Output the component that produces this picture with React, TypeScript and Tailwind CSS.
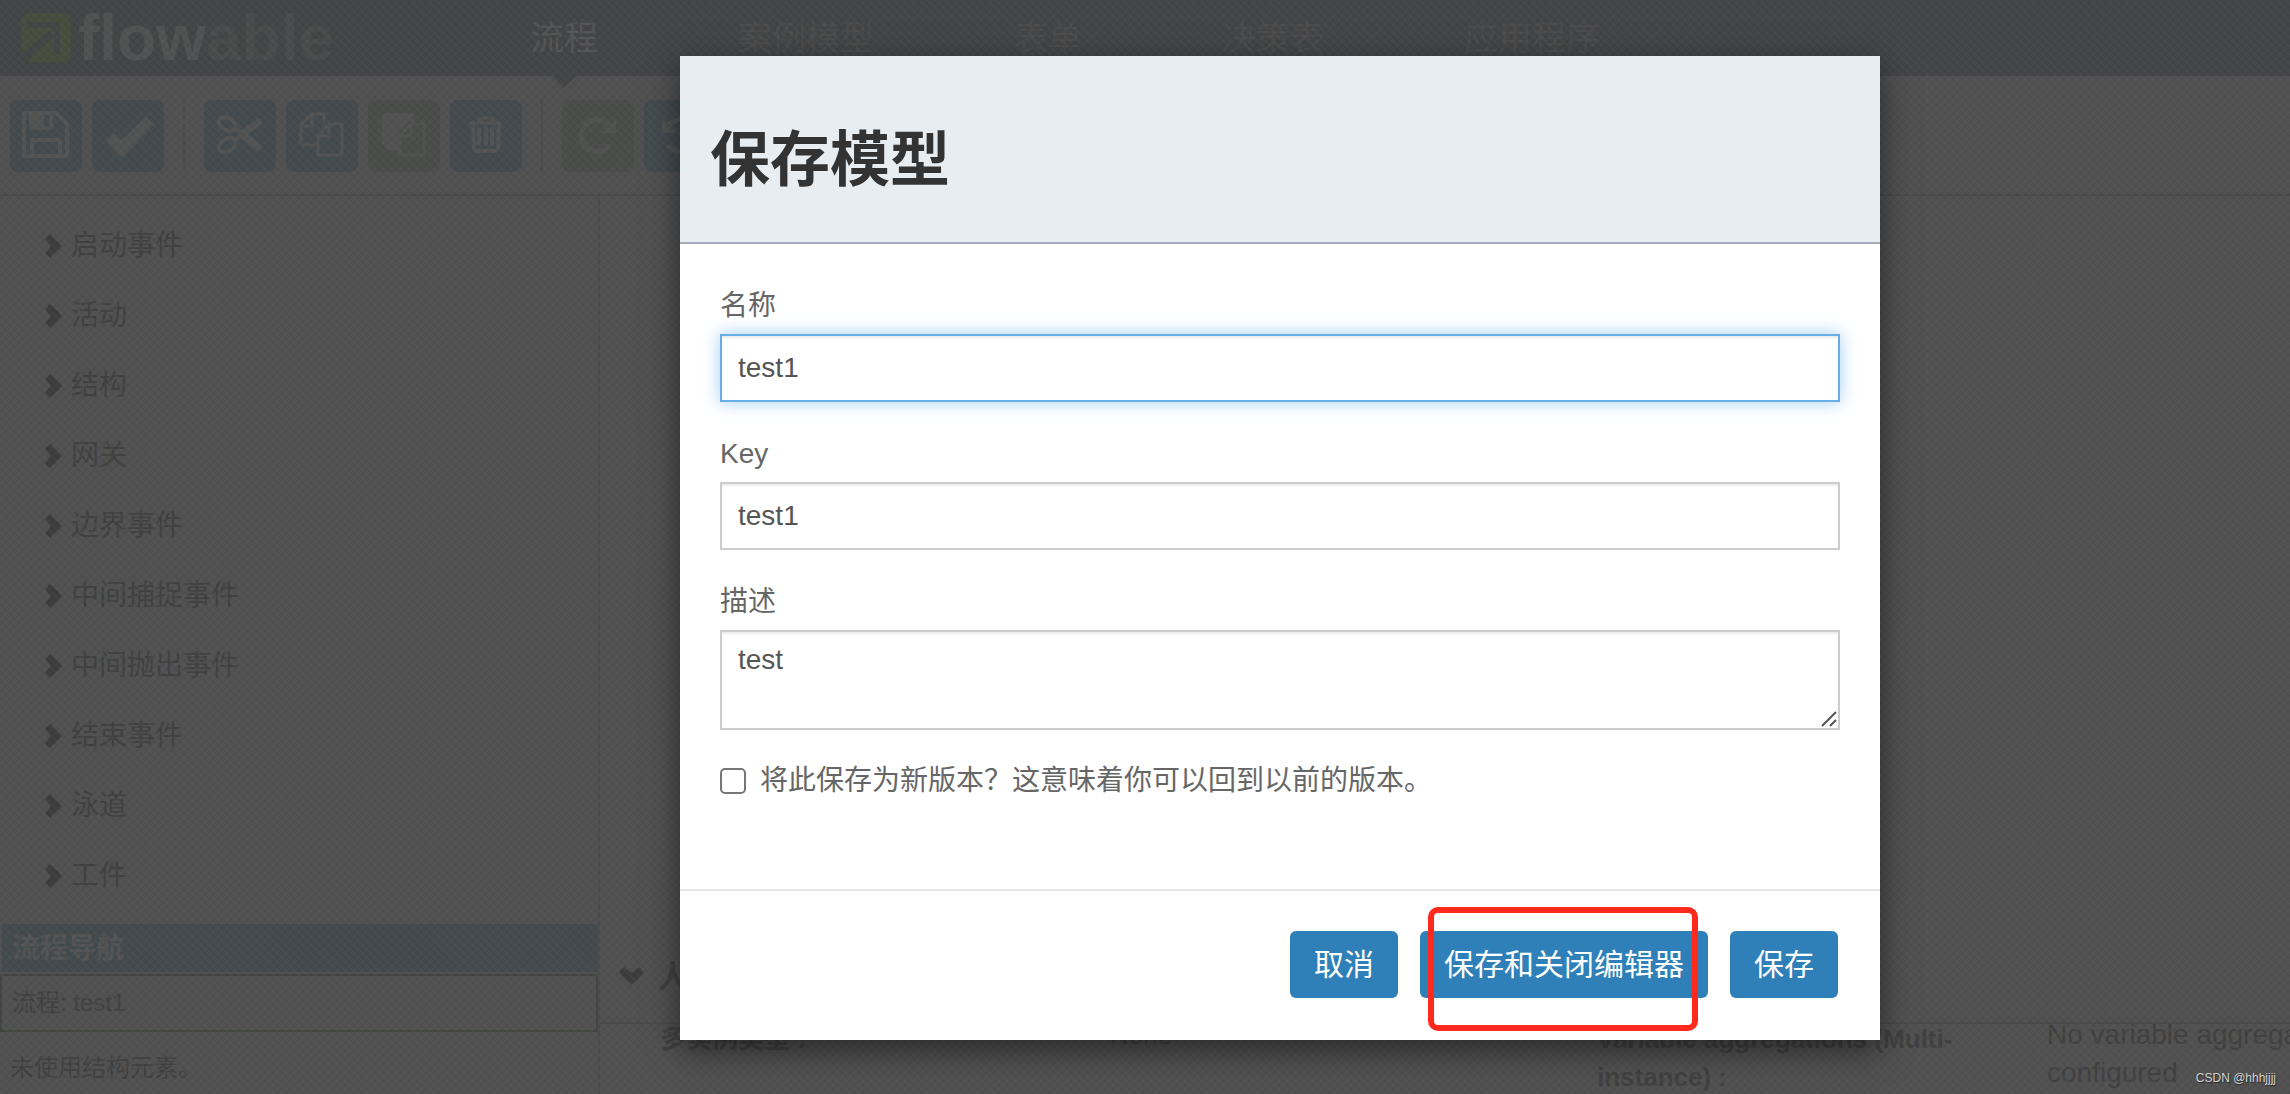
import { useState, type ReactNode } from "react";

const NAV = ["流程", "案例模型", "表单", "决策表", "应用程序"];

const PALETTE = [
  "启动事件",
  "活动",
  "结构",
  "网关",
  "边界事件",
  "中间捕捉事件",
  "中间抛出事件",
  "结束事件",
  "泳道",
  "工件",
];

function Icon({ children }: { children: ReactNode }) {
  return (
    <svg viewBox="0 0 72 72" className="size-full" fill="none" stroke="currentColor" aria-hidden="true">
      {children}
    </svg>
  );
}

function SaveIcon() {
  return (
    <Icon>
      <path d="M14 13H46L57 24V56H14Z" strokeWidth="4" strokeLinejoin="round" />
      <path d="M22 56V40H50V56" strokeWidth="4" strokeLinejoin="round" />
      <path
        d="M19 13H43V26Q43 30 39 30H24Q19 30 19 25ZM34 15V26H39V15Z"
        fill="currentColor"
        fillRule="evenodd"
        stroke="none"
      />
    </Icon>
  );
}

function CheckIcon() {
  return (
    <Icon>
      <path d="M14 41L22 33L30 40L54 17L62 24L30 58Z" fill="currentColor" stroke="none" />
    </Icon>
  );
}

function CutIcon() {
  return (
    <Icon>
      <ellipse cx="23" cy="24" rx="9" ry="6" strokeWidth="4" transform="rotate(28 23 24)" />
      <ellipse cx="23" cy="45" rx="9" ry="6" strokeWidth="4" transform="rotate(-32 23 45)" />
      <path d="M30 28L40 34L30 41" strokeWidth="4" />
      <path
        d="M36 32L53 19Q58 18 58 24L44 34L58 46Q57 52 52 50L36 38Z"
        fill="currentColor"
        stroke="none"
      />
    </Icon>
  );
}

function CopyIcon() {
  return (
    <Icon>
      <path d="M31 45H17L15 43V25L26 14H38V24M15 26H26V14" strokeWidth="3" strokeLinejoin="round" />
      <path d="M43 24H56V55H32V36L43 24V36H32" strokeWidth="3" strokeLinejoin="round" />
    </Icon>
  );
}

function PasteIcon() {
  return (
    <Icon>
      <path
        d="M16 13H44Q46 13 46 15V22H40L31 33V50H20L14 44V15Q14 13 16 13Z"
        fill="currentColor"
        stroke="none"
      />
      <path d="M43 24H56V55H32V36L43 24V36H32" strokeWidth="3" strokeLinejoin="round" />
    </Icon>
  );
}

function TrashIcon() {
  return (
    <Icon>
      <path d="M19 23H52M28 22L31 18H41L44 22" strokeWidth="3" />
      <path d="M23 24L24 48Q24 51 28 51H44Q48 51 48 48L49 24" strokeWidth="4" />
      <path d="M29 29V44M36 29V44M42 29V44" strokeWidth="4" strokeLinecap="round" />
    </Icon>
  );
}

function RedoIcon() {
  return (
    <Icon>
      <path d="M47 25A16 16 0 1 0 48 45" strokeWidth="5" />
      <path d="M54 19V33H39Z" fill="currentColor" stroke="none" />
    </Icon>
  );
}

function UndoIcon() {
  return (
    <Icon>
      <path d="M25 25A16 16 0 1 1 24 45" strokeWidth="5" />
      <path d="M18 19V33H33Z" fill="currentColor" stroke="none" />
    </Icon>
  );
}

function Chevron({ className }: { className: string }) {
  return (
    <svg viewBox="0 0 18 24" className={className} fill="currentColor" aria-hidden="true">
      <path d="M0 5L5 0L17 12L5 24L0 19L6 12Z" />
    </svg>
  );
}

function ToolButton({ label, disabled, children }: { label: string; disabled?: boolean; children: ReactNode }) {
  return (
    <button
      type="button"
      aria-label={label}
      disabled={disabled}
      className="size-[72px] shrink-0 rounded-lg bg-[#444b4e] text-[#525353] disabled:bg-[#4b4d4b] disabled:text-[#515251]"
    >
      {children}
    </button>
  );
}

function Divider() {
  return (
    <div className="flex w-5 shrink-0 justify-center">
      <div className="h-[72px] w-0.5 bg-[#4c4c4c]" />
    </div>
  );
}

function Header() {
  return (
    <header className="flex h-[76px] items-center bg-[#444547]">
      <a href="#home" className="ml-5 flex w-[320px] shrink-0 items-center gap-1.5">
        <svg viewBox="0 0 52 52" className="size-[52px] shrink-0" aria-hidden="true">
          <path d="M10 1H41Q51 1 51 11V40Q51 50 41 50H8L1 51V10Q1 1 10 1Z" fill="#494d3f" />
          <path d="M10 13H37V40" fill="none" stroke="#444547" strokeWidth="6" strokeLinecap="round" />
          <path d="M1 50V42L29 19L34 23L10 50Z" fill="#444547" />
          <path d="M9 47L29 28V49H9Z" fill="#494d3f" />
        </svg>
        <span className="text-[64px] leading-[68px] font-bold text-[#515252]">
          flow<span className="text-[#4a4c4b]">able</span>
        </span>
      </a>
      <nav className="ml-[190px] flex gap-[140px] text-[34px] leading-[44px] whitespace-nowrap">
        {NAV.map((item, i) => (
          <a
            key={item}
            href={`#nav-${i}`}
            className={i === 0 ? "relative text-[#555555]" : "text-[#4b4c4b]"}
          >
            {item}
            {i === 0 && (
              <svg
                viewBox="0 0 24 12"
                className="absolute top-[60px] left-1/2 h-3 w-6 -translate-x-1/2"
                fill="#444547"
                aria-hidden="true"
              >
                <path d="M0 0H24L12 12Z" />
              </svg>
            )}
          </a>
        ))}
      </nav>
    </header>
  );
}

function Toolbar() {
  return (
    <div className="flex h-[120px] items-start gap-2.5 overflow-hidden border-b-2 border-[#4a4a4a] pt-6 pl-2.5">
      <ToolButton label="保存模型"><SaveIcon /></ToolButton>
      <ToolButton label="验证模型"><CheckIcon /></ToolButton>
      <Divider />
      <ToolButton label="剪切"><CutIcon /></ToolButton>
      <ToolButton label="复制"><CopyIcon /></ToolButton>
      <ToolButton label="粘贴" disabled><PasteIcon /></ToolButton>
      <ToolButton label="删除"><TrashIcon /></ToolButton>
      <Divider />
      <ToolButton label="重做" disabled><RedoIcon /></ToolButton>
      <ToolButton label="撤销"><UndoIcon /></ToolButton>
    </div>
  );
}

function Sidebar() {
  return (
    <aside className="flex w-[600px] shrink-0 flex-col border-r-2 border-[#4c4c4c] text-[#414141]">
      <ul className="pt-[15px] pb-[13px]">
        {PALETTE.map((item) => (
          <li key={item}>
            <button type="button" className="flex h-[70px] items-center gap-2 pl-[45px] text-[28px]">
              <Chevron className="h-6 w-[18px] text-[#3d3d3d]" />
              {item}
            </button>
          </li>
        ))}
      </ul>
      <h2 className="ml-0.5 h-12 bg-[#444b4e] pl-[10px] text-[28px] leading-[50px] font-bold text-[#545454]">
        流程导航
      </h2>
      <div className="mt-0.5 h-[58px] border-2 border-[#424640] pl-[10px] text-2xl leading-[54px]">流程: test1</div>
      <p className="pt-4 pl-[10px] text-2xl leading-[40px]">未使用结构元素。</p>
    </aside>
  );
}

function Properties() {
  return (
    <section className="text-[#414141]">
      <div className="flex h-[93px] items-center gap-4 border-b-2 border-[#4a4a4a] pl-[22px] text-[32px] font-bold">
        <Chevron className="h-[27px] w-[19px] rotate-90 text-[#3d3d3d]" />
        <span>人</span>
      </div>
      <div className="flex h-[70px] pl-[60px] text-[26px] leading-[38px]">
        <div className="-mt-1 w-[450px] shrink-0 font-bold">多实例类型 :</div>
        <div className="-mt-2 w-[487px] shrink-0">None</div>
        <div className="-mt-1 w-[390px] shrink-0 font-bold">Variable aggregations (Multi-instance) :</div>
        <div className="-mt-2 ml-[60px] w-[380px] shrink-0 text-[28px]">No variable aggregations configured</div>
      </div>
    </section>
  );
}

const FIELD =
  "block w-full rounded-none border-2 border-[#cccccc] bg-white px-4 text-[28px] text-[#555555] shadow-[inset_0_2px_2px_rgba(0,0,0,0.075)] outline-none";
const ACTION = "h-[67px] rounded-md bg-[#2f80b9] px-6 text-[30px] text-white";

function SaveDialog() {
  const [name, setName] = useState("test1");
  const [key, setKey] = useState("test1");
  const [description, setDescription] = useState("test");
  const [newVersion, setNewVersion] = useState(false);

  return (
    <form
      role="dialog"
      aria-labelledby="dialog-title"
      onSubmit={(e) => e.preventDefault()}
      className="w-[1200px] bg-white shadow-[0_10px_30px_rgba(0,0,0,0.5)]"
    >
      <div className="border-b-2 border-[#a4adba] bg-[#e8edf1] px-[30px] pt-[69px] pb-[45px]">
        <h1 id="dialog-title" className="text-[60px] leading-[72px] font-bold text-[#333333]">
          保存模型
        </h1>
      </div>

      <div className="px-10 pt-[42px] pb-[89px] text-[28px] text-[#666666]">
        <label htmlFor="model-name" className="block leading-[40px]">名称</label>
        <input
          id="model-name"
          value={name}
          onChange={(e) => setName(e.target.value)}
          className="mt-2 mb-8 block h-[68px] w-full rounded-none border-2 border-[#66afe9] bg-white px-4 text-[28px] text-[#555555] shadow-[inset_0_2px_2px_rgba(0,0,0,0.075),0_0_16px_rgba(102,175,233,0.6)] outline-none"
        />
        <label htmlFor="model-key" className="block leading-[40px]">Key</label>
        <input
          id="model-key"
          value={key}
          onChange={(e) => setKey(e.target.value)}
          className={`${FIELD} mt-2 mb-8 h-[68px]`}
        />
        <label htmlFor="model-description" className="block leading-[40px]">描述</label>
        <div className="relative mt-2">
          <textarea
            id="model-description"
            value={description}
            onChange={(e) => setDescription(e.target.value)}
            className={`${FIELD} h-[100px] resize-none pt-2 leading-[40px]`}
          />
          <svg
            viewBox="0 0 16 16"
            className="pointer-events-none absolute right-[3px] bottom-[3px] size-4"
            stroke="#555555"
            strokeWidth="2"
            aria-hidden="true"
          >
            <path d="M1 15L15 1M9 15L15 9" />
          </svg>
        </div>
        <label className="mt-8 flex items-center gap-3.5 leading-[38px]">
          <input
            type="checkbox"
            checked={newVersion}
            onChange={(e) => setNewVersion(e.target.checked)}
            className="size-[26px] appearance-none rounded-[5px] border-2 border-[#767676] bg-white checked:bg-[#2f80b9]"
          />
          将此保存为新版本？这意味着你可以回到以前的版本。
        </label>
      </div>

      <div className="flex justify-end gap-[22px] border-t-2 border-[#e5e5e5] px-[42px] pt-10 pb-[42px]">
        <button type="button" className={ACTION}>取消</button>
        <div className="relative">
          <button type="submit" className={ACTION}>保存和关闭编辑器</button>
          <div className="pointer-events-none absolute -top-6 right-2.5 -bottom-[33px] left-2 rounded-[10px] border-6 border-[#ff2a1c]" />
        </div>
        <button type="submit" className={ACTION}>保存</button>
      </div>
    </form>
  );
}

export default function App() {
  return (
    <div
      lang="zh-CN"
      className="relative flex min-h-screen flex-col overflow-hidden bg-[#515151] font-['Liberation_Sans','Noto_Sans_CJK_SC',sans-serif]"
    >
      <Header />
      <Toolbar />
      <main className="flex flex-1">
        <Sidebar />
        <div className="flex min-w-0 flex-1 flex-col justify-end overflow-hidden">
          <Properties />
        </div>
      </main>

      <div className="pointer-events-none absolute inset-0 bg-[repeating-linear-gradient(45deg,rgba(255,255,255,0.02)_0_3px,transparent_3px_6px),repeating-linear-gradient(-45deg,rgba(0,0,0,0.04)_0_3px,transparent_3px_6px)]" />
      <div className="absolute inset-0 flex items-start justify-center pt-14 pl-[270px]">
        <SaveDialog />
      </div>
      <div className="absolute right-[14px] bottom-2 text-xs text-[#d4d4d4] [text-shadow:1px_1px_1px_#222]">
        CSDN @hhhjjjj
      </div>
    </div>
  );
}
